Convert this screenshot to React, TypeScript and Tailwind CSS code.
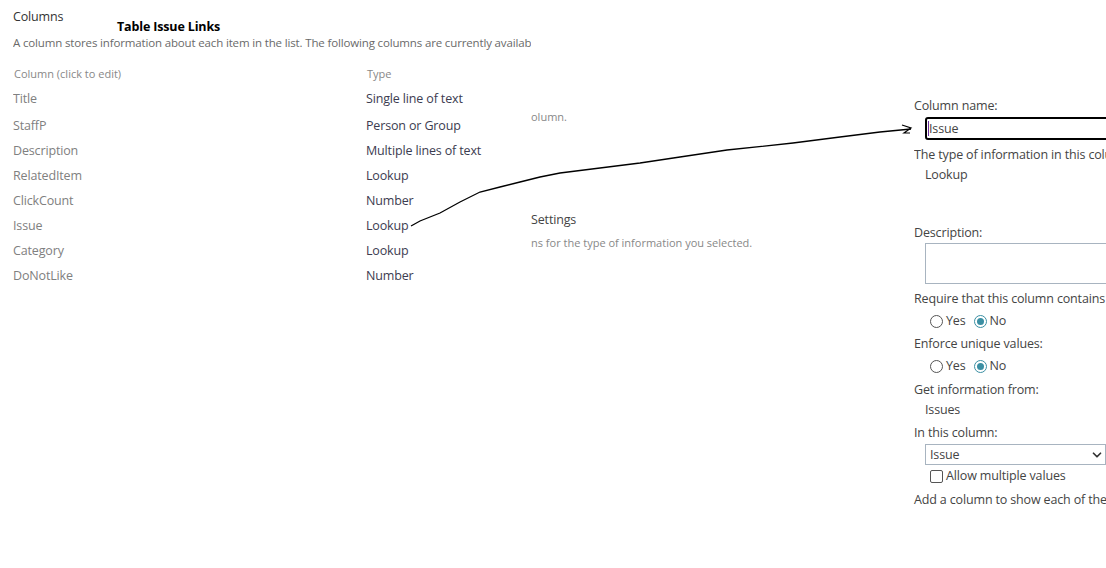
import { ChevronDown } from "lucide-react"

const columns = [
    { name: "Title", type: "Single line of text" },
    { name: "StaffP", type: "Person or Group" },
    { name: "Description", type: "Multiple lines of text" },
    { name: "RelatedItem", type: "Lookup" },
    { name: "ClickCount", type: "Number" },
    { name: "Issue", type: "Lookup" },
    { name: "Category", type: "Lookup" },
    { name: "DoNotLike", type: "Number" },
]

function Radio({ checked, label }: { checked?: boolean; label: string }) {
    return (
        <span className="flex items-center gap-[3px]">
            <span className={`w-[13px] h-[13px] rounded-full border flex items-center justify-center ${checked ? 'border-[#3b8fa3]' : 'border-[#555]'}`}>
                {checked && <span className="w-[7px] h-[7px] rounded-full bg-[#3b8fa3]" />}
            </span>
            <span>{label}</span>
        </span>
    )
}

export default function App() {
    return (
        <div className="relative w-[1106px] h-[568px] overflow-hidden bg-white pt-[1px] text-[12.5px] tracking-[-0.15px] text-[#444] font-['Segoe_UI','Open_Sans',sans-serif]">
            <div className="flex">
                {/* Left: column list */}
                <div className="w-[518px] ml-[13px] shrink-0 overflow-hidden whitespace-nowrap">
                    <div className="h-[34px] relative">
                        <div className="pt-[7px] text-[#333]">Columns</div>
                        <div className="absolute left-[104px] top-[17px] font-bold text-black">Table Issue Links</div>
                    </div>
                    <div className="text-[11.5px] text-[#6a6a6a] leading-[16px]">A column stores information about each item in the list. The following columns are currently available in this list:</div>
                    <div className="mt-[16px] grid grid-cols-[353px_1fr] text-[11px] tracking-normal text-[#888] leading-[14px]">
                        <div className="pl-[1px]">Column (click to edit)</div>
                        <div className="pl-[1px]">Type</div>
                    </div>
                    <div className="mt-[9px] grid grid-cols-[353px_1fr]">
                        {columns.map((c, i) => (
                            <div key={c.name} className="contents">
                                <div className={`text-[#808080] leading-[18px] ${i === 0 ? 'mb-[9px]' : 'mb-[7px]'}`}>{c.name}</div>
                                <div className={`text-[#3c3c50] leading-[18px] ${i === 0 ? 'mb-[9px]' : 'mb-[7px]'}`}>{c.type}</div>
                            </div>
                        ))}
                    </div>
                </div>

                {/* Middle: clipped settings panel */}
                <div className="w-[383px] shrink-0 overflow-hidden whitespace-nowrap">
                    <div className="mt-[108px] text-[11px] tracking-normal text-[#888]">olumn.</div>
                    <div className="mt-[85px] text-[#444]">Settings</div>
                    <div className="mt-[6px] text-[11px] tracking-normal text-[#888]">ns for the type of information you selected.</div>
                </div>

                {/* Right: column form */}
                <div className="flex-1 whitespace-nowrap leading-[18px]">
                    <div className="mt-[96px]">Column name:</div>
                    <div className="mt-[2px] ml-[11px] w-[220px] h-[23px] border-2 border-black rounded-[3px] flex items-center pl-[1px]">
                        <span className="w-[1px] h-[15px] bg-[#6b2fa0]" />
                        <span>Issue</span>
                    </div>
                    <div className="mt-[6px] overflow-hidden w-[192px]">The type of information in this column is:</div>
                    <div className="mt-[2px] ml-[11px]">Lookup</div>
                    <div className="mt-[40px]">Description:</div>
                    <div className="mt-[1px] ml-[11px] w-[220px] h-[41px] border border-[#a8b4c0]" />
                    <div className="mt-[6px]">Require that this column contains information:</div>
                    <div className="mt-[4px] ml-[16px] flex gap-[8px]">
                        <Radio label="Yes" />
                        <Radio checked label="No" />
                    </div>
                    <div className="mt-[5px]">Enforce unique values:</div>
                    <div className="mt-[4px] ml-[16px] flex gap-[8px]">
                        <Radio label="Yes" />
                        <Radio checked label="No" />
                    </div>
                    <div className="mt-[6px]">Get information from:</div>
                    <div className="mt-[2px] ml-[11px]">Issues</div>
                    <div className="mt-[5px]">In this column:</div>
                    <div className="mt-[2px] ml-[11px] w-[181px] h-[21px] border border-[#a8b4c0] flex items-center justify-between pl-[4px] pr-[1px]">
                        <span>Issue</span>
                        <ChevronDown className="w-[14px] h-[14px] text-[#333]" strokeWidth={3} />
                    </div>
                    <label className="mt-[2px] ml-[16px] flex items-center gap-[3px]">
                        <span className="w-[13px] h-[13px] border border-[#555] rounded-[2px]" />
                        <span>Allow multiple values</span>
                    </label>
                    <div className="mt-[6px]">Add a column to show each of these additional fields:</div>
                </div>
            </div>

            {/* Hand-drawn annotation arrow */}
            <svg className="absolute left-0 top-0 pointer-events-none" width="1106" height="568">
                <path
                    d="M411 226 L420 221 L440 213 L460 202 L480 192 L500 187 L520 182 L540 177 L560 173 L600 168 L640 163 L680 157 L727 150 L793 143 L840 137 L880 132 L911 129"
                    fill="none"
                    stroke="#000"
                    strokeWidth="1.3"
                />
                <path d="M902 125 L911 128 L904 133 L910 133" fill="none" stroke="#000" strokeWidth="1.2" />
            </svg>
        </div>
    )
}
